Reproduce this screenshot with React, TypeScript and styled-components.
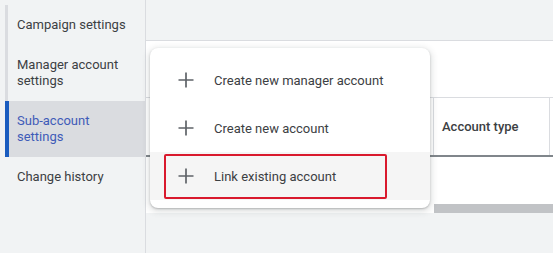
import React from 'react';
import styled, { createGlobalStyle } from 'styled-components';

const GlobalStyle = createGlobalStyle`
  html, body {
    margin: 0;
    padding: 0;
    background: #f1f3f4;
  }
  body {
    font-family: Roboto, "Liberation Sans", Arial, sans-serif;
    -webkit-font-smoothing: antialiased;
  }
`;

// 页面整体
const Page = styled.div`
  display: flex;
  width: 553px;
  height: 253px;
  overflow: hidden;
  background: #f1f3f4;
`;

// 左侧导航
const Sidebar = styled.nav`
  flex: 0 0 140px;
  border-right: 1px solid #dadce0;
  padding: 5px 0 0 5px;
  display: flex;
  flex-direction: column;
`;

const NavItem = styled.div<{ $active?: boolean; $track?: boolean }>`
  padding: 12px 12px 12px ${(p) => (p.$active ? 8 : p.$track ? 9 : 12)}px;
  font-size: 13px;
  line-height: 16px;
  color: ${(p) => (p.$active ? '#3f5bb8' : '#3c4043')};
  background: ${(p) => (p.$active ? '#dadce0' : 'transparent')};
  border-left: ${(p) =>
    p.$active ? '4px solid #1a5cbf' : p.$track ? '3px solid #dadce0' : 'none'};
`;

// 右侧主体
const Main = styled.main`
  flex: 1;
  min-width: 0;
  position: relative;
  display: flex;
  flex-direction: column;
`;

const TopBar = styled.div`
  height: 40px;
`;

const Panel = styled.section`
  background: #fff;
  border-top: 1px solid #dadce0;
  height: 172px;
  display: flex;
  flex-direction: column;
`;

const Spacer = styled.div`
  height: 56px;
`;

const HeaderRow = styled.div`
  display: flex;
  height: 57px;
  overflow: hidden;
  border-top: 1px solid #dadce0;
  border-bottom: 2px solid #80868b;
`;

const HeaderCell = styled.div<{ $width: number; $divider?: boolean }>`
  flex: 0 0 ${(p) => p.$width}px;
  display: flex;
  align-items: center;
  padding-left: 8px;
  box-sizing: border-box;
  border-left: ${(p) => (p.$divider ? '1px solid #dadce0' : 'none')};
  font-size: 13px;
  font-weight: 500;
  color: #3c4043;
`;

const Body = styled.div`
  flex: 1;
`;

const ScrollTrack = styled.div`
  height: 9px;
  display: flex;
  justify-content: flex-end;
`;

const ScrollThumb = styled.div`
  width: 119px;
  background: #c1c3c6;
`;

// 下拉菜单
const Menu = styled.div`
  position: absolute;
  left: 4px;
  top: 48px;
  width: 280px;
  padding: 8px 0;
  background: #fff;
  border-radius: 8px;
  box-shadow: 0 1px 2px rgba(60, 64, 67, 0.3), 0 2px 6px 2px rgba(60, 64, 67, 0.15);
`;

const MenuItem = styled.div<{ $hover?: boolean }>`
  position: relative;
  height: 48px;
  display: flex;
  align-items: center;
  gap: 20px;
  padding-left: 28px;
  font-size: 13px;
  color: #3c4043;
  background: ${(p) => (p.$hover ? '#f5f5f5' : 'transparent')};
`;

const Highlight = styled.div`
  position: absolute;
  left: 14px;
  top: 2px;
  width: 223px;
  height: 45px;
  box-sizing: border-box;
  border: 2px solid #d9192d;
  border-radius: 2px;
`;

const PlusIcon = () => (
  <svg width="16" height="16" viewBox="0 0 16 16">
    <path d="M8 0.5v15M0.5 8h15" stroke="#5f6368" strokeWidth="1.7" fill="none" />
  </svg>
);

const navItems = [
  { label: 'Campaign settings', track: true },
  { label: 'Manager account settings', track: true },
  { label: 'Sub-account settings', active: true },
  { label: 'Change history' },
];

const menuItems = [
  { label: 'Create new manager account' },
  { label: 'Create new account' },
  { label: 'Link existing account', hover: true, marked: true },
];

const App: React.FC = () => {
  return (
    <>
      <GlobalStyle />
      <Page>
        <Sidebar>
          {navItems.map((item) => (
            <NavItem key={item.label} $active={item.active} $track={item.track}>
              {item.label}
            </NavItem>
          ))}
        </Sidebar>
        <Main>
          <TopBar />
          <Panel>
            <Spacer />
            <HeaderRow>
              <HeaderCell $width={287} />
              <HeaderCell $width={116} $divider>
                Account type
              </HeaderCell>
              <HeaderCell $width={20} $divider />
            </HeaderRow>
            <Body />
            <ScrollTrack>
              <ScrollThumb />
            </ScrollTrack>
          </Panel>
          <Menu>
            {menuItems.map((item) => (
              <MenuItem key={item.label} $hover={item.hover}>
                <PlusIcon />
                <span>{item.label}</span>
                {item.marked && <Highlight />}
              </MenuItem>
            ))}
          </Menu>
        </Main>
      </Page>
    </>
  );
};

export default App;
